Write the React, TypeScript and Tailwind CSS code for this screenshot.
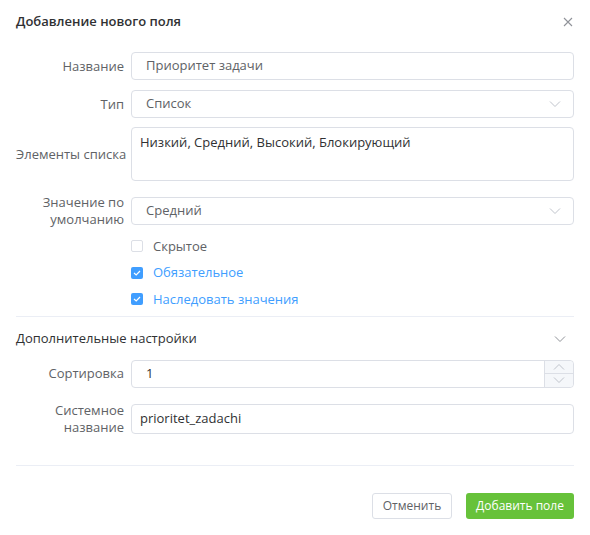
import React from "react";

const font = { fontFamily: '"Open Sans", "Noto Sans", sans-serif' };

const Chevron = ({ up = false, color = "#c0c4cc" }: { up?: boolean; color?: string }) => (
  <svg width="12" height="8" viewBox="0 0 12 8" fill="none" className={up ? "rotate-180" : ""}>
    <path d="M1 1.5L6 6.5L11 1.5" stroke={color} strokeWidth="1" />
  </svg>
);

const Check = ({ checked, label }: { checked: boolean; label: string }) => (
  <div className="flex items-center h-[26.5px]">
    <span
      className={
        checked
          ? "w-[12px] h-[12px] rounded-[2px] bg-[#409eff] flex items-center justify-center"
          : "w-[12px] h-[12px] rounded-[2px] border border-[#dcdfe6] bg-white"
      }
    >
      {checked && (
        <svg width="8" height="6" viewBox="0 0 8 6" fill="none">
          <path d="M1 3L3.2 5L7 1" stroke="white" strokeWidth="1.2" />
        </svg>
      )}
    </span>
    <span className={"ml-[10px] text-[13px] " + (checked ? "text-[#409eff]" : "text-[#606266]")}>{label}</span>
  </div>
);

const Row = ({ label, children, className = "" }: { label: React.ReactNode; children: React.ReactNode; className?: string }) => (
  <div className={"flex items-center " + className}>
    <div className="w-[115px] pr-[7px] text-right text-[13px] leading-[17px] text-[#606266] shrink-0 whitespace-nowrap">
      {label}
    </div>
    <div className="flex-1">{children}</div>
  </div>
);

export default function App() {
  return (
    <div className="w-[590px] h-[535px] bg-white relative overflow-hidden" style={font}>
      <div className="px-4">
        <div className="flex items-center justify-between h-[18px] mt-[13px]">
          <h2 className="text-[13px] font-semibold text-[#303133]">Добавление нового поля</h2>
          <svg width="10" height="10" viewBox="0 0 10 10" className="mr-[1px]">
            <path d="M1 1L9 9M9 1L1 9" stroke="#909399" strokeWidth="1.1" />
          </svg>
        </div>

        <Row label="Название" className="mt-[21px]">
          <div className="h-[28px] border border-[#dcdfe6] rounded-[4px] flex items-center pl-[14px] text-[13px] text-[#606266]">
            Приоритет задачи
          </div>
        </Row>

        <Row label="Тип" className="mt-[10px]">
          <div className="h-[28px] border border-[#dcdfe6] rounded-[4px] flex items-center justify-between pl-[14px] pr-[12px] text-[13px] text-[#606266]">
            <span>Список</span>
            <Chevron />
          </div>
        </Row>

        <Row label="Элементы списка" className="mt-[9px]">
          <div className="h-[54px] border border-[#dcdfe6] rounded-[4px] px-[8px] pt-[5px] text-[13px] leading-[18px] text-[#303133]">
            Низкий, Средний, Высокий, Блокирующий
          </div>
        </Row>

        <Row
          label={
            <>
              Значение по
              <br />
              умолчанию
            </>
          }
          className="mt-[13px]"
        >
          <div className="h-[28px] border border-[#dcdfe6] rounded-[4px] flex items-center justify-between pl-[14px] pr-[12px] text-[13px] text-[#606266]">
            <span>Средний</span>
            <Chevron />
          </div>
        </Row>

        <div className="pl-[115px] mt-[5px]">
          <Check checked={false} label="Скрытое" />
          <Check checked label="Обязательное" />
          <Check checked label="Наследовать значения" />
        </div>

        <div className="h-px bg-[#ebeef5] mt-[3px]" />

        <div className="flex items-center justify-between h-[20px] mt-[12px]">
          <span className="text-[13px] text-[#303133]">Дополнительные настройки</span>
          <span className="mr-[8px]">
            <Chevron color="#909399" />
          </span>
        </div>

        <Row label="Сортировка" className="mt-[11px]">
          <div className="h-[28px] border border-[#dcdfe6] rounded-[4px] flex items-center text-[13px] text-[#303133]">
            <span className="flex-1 pl-[14px]">1</span>
            <div className="w-[29px] h-full border-l border-[#dcdfe6] bg-[#f5f7fa] rounded-r-[4px] flex flex-col">
              <div className="flex-1 flex items-center justify-center border-b border-[#dcdfe6]">
                <Chevron up />
              </div>
              <div className="flex-1 flex items-center justify-center">
                <Chevron />
              </div>
            </div>
          </div>
        </Row>

        <Row
          label={
            <>
              Системное
              <br />
              название
            </>
          }
          className="mt-[14px]"
        >
          <div className="h-[30px] border border-[#dcdfe6] rounded-[4px] flex items-center px-[8px] text-[13px] text-[#303133]">
            prioritet_zadachi
          </div>
        </Row>

        <div className="h-px bg-[#ebeef5] mt-[29px]" />

        <div className="flex justify-end gap-[14px] mt-[27px]">
          <button className="h-[26px] w-[80px] border border-[#dcdfe6] rounded-[3px] bg-white text-[12px] text-[#606266]">
            Отменить
          </button>
          <button className="h-[26px] w-[108px] rounded-[3px] bg-[#67c23a] text-[12px] text-white">
            Добавить поле
          </button>
        </div>
      </div>
    </div>
  );
}
